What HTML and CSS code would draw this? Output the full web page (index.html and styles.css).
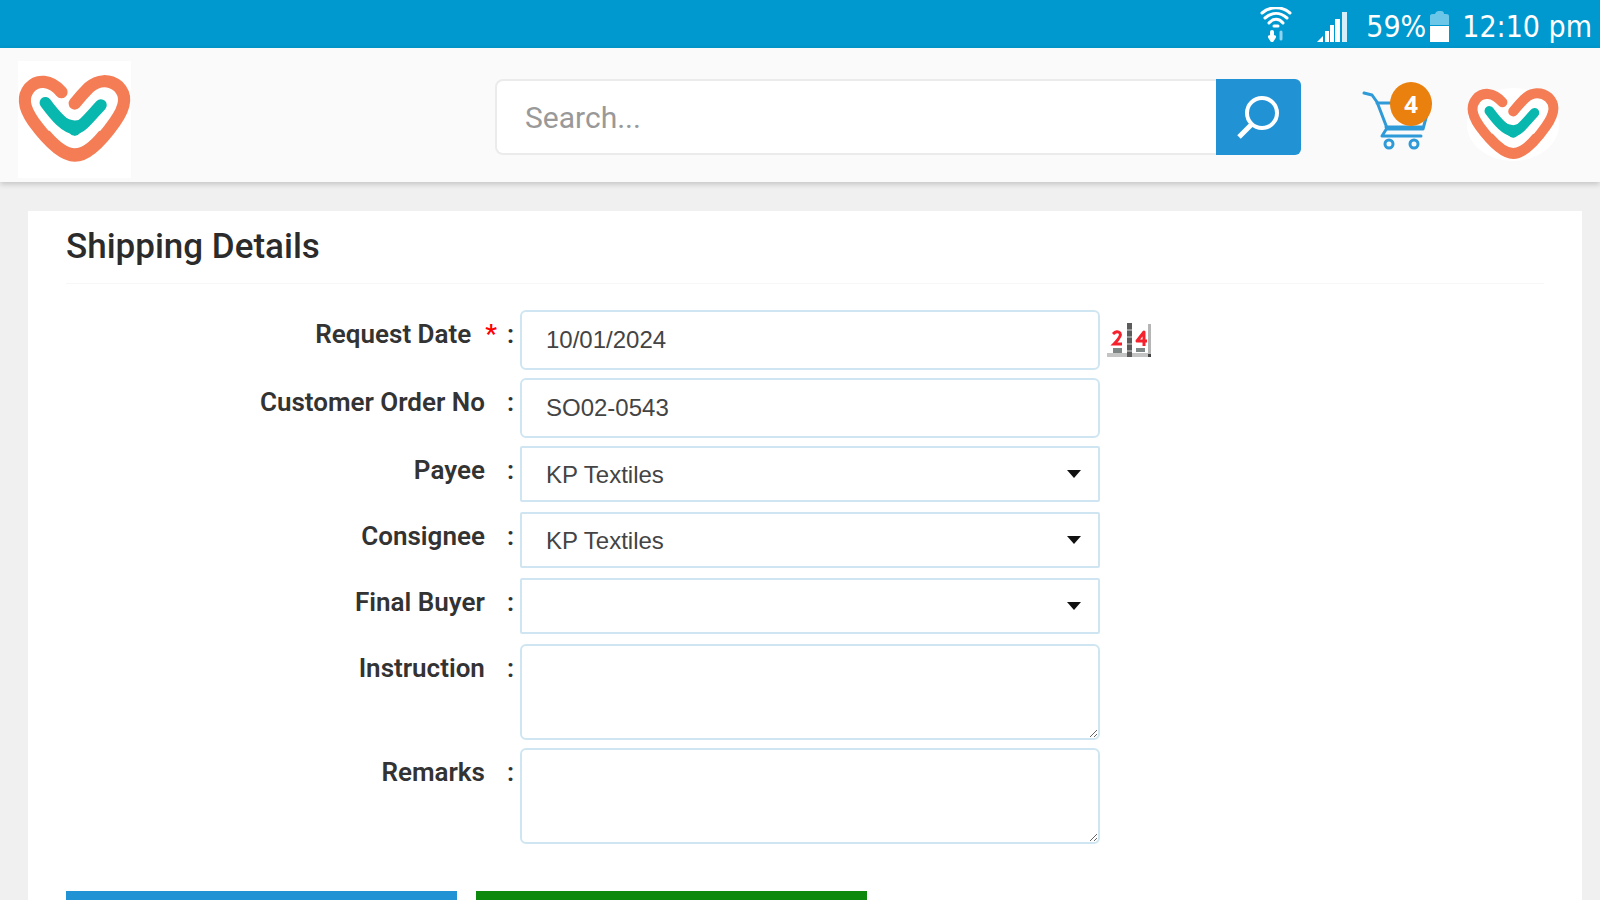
FILE: index.html
```html
<!DOCTYPE html>
<html lang="en">
<head>
  <meta charset="UTF-8" />
  <meta name="viewport" content="width=device-width, initial-scale=1.0" />
  <title>Shipping Details</title>
  <link rel="stylesheet" href="styles.css">
</head>
<body>

  <!-- Status bar -->
  <div class="status-bar">
    <svg class="wifi-icon" viewBox="0 0 32 35" width="32" height="35" fill="none" stroke="#fff" stroke-width="3" stroke-linecap="round">
      <path d="M2 6 C10 -1 22 -1 30 6" />
      <path d="M5 11 C12 5 20 5 27 11" />
      <path d="M9 16 C13 11 19 11 23 16" />
      <path d="M14 19 H18" />
      <path d="M12 25 V32 M10 30 L12 33 L14 30" stroke-width="4" />
      <path d="M21 32 V25" stroke="#8fd3ee" />
    </svg>
    <svg class="signal-icon" viewBox="0 0 31 31" width="31" height="31" fill="#fff">
      <path d="M0 31 L6 25 V31 Z" />
      <rect x="8" y="20" width="4" height="11" />
      <rect x="13" y="14" width="4" height="17" />
      <rect x="18" y="8" width="5" height="23" />
      <rect x="25" y="1" width="5" height="30" fill="#d5eef9" />
    </svg>
    <span class="battery-level">59%</span>
    <svg class="battery-icon" viewBox="0 0 21 31" width="21" height="31">
      <path d="M1 14 V5 Q1 3 4 3 H6 Q7 0 10 0 H12 Q15 0 15 3 H17 Q20 3 20 5 V14 Z" fill="#6cc6e8" />
      <path d="M1 15 H20 V31 H1 Z" fill="#fff" />
    </svg>
    <span class="clock">12:10 pm</span>
  </div>

  <!-- Header -->
  <header class="header">
    <a class="logo" href="#" aria-label="Home">
      <svg viewBox="58 104 338 266" width="113" height="89" fill="none" stroke-linecap="round" stroke-linejoin="round">
        <g id="heart">
          <path d="M188 155 C155 117 115 116 92 143 C70 170 74 200 104 243 C142 295 188 345 228 345 C268 345 310 298 348 244 C382 196 384 164 358 138 C330 116 297 118 270 142 Q248 164 228 189" stroke="#f47d55" stroke-width="37" />
          <path d="M150 278 C180 312 205 330 228 330 C252 330 276 312 304 278 C278 322 252 350 228 350 C204 350 176 320 150 278" fill="#f47d55" stroke="#f47d55" stroke-width="14" />
          <path d="M140 187 C172 230 200 262 228 264 C250 262 272 230 306 194" stroke="#08b7ad" stroke-width="35" />
          <path d="M190 234 Q228 262 264 234 Q242 276 228 278 Q212 276 190 234" fill="#08b7ad" stroke="#08b7ad" stroke-width="16" />
        </g>
      </svg>
    </a>

    <form class="search" role="search">
      <input type="search" name="search" placeholder="Search..." aria-label="Search" />
      <button type="submit" aria-label="Search">
        <svg viewBox="0 0 43 45" width="43" height="45" fill="none" stroke="#fff" stroke-width="4">
          <circle cx="25" cy="18" r="15" />
          <path d="M15 29 L2 42" stroke-width="5" />
        </svg>
      </button>
    </form>

    <a class="cart" href="#" aria-label="Cart">
      <svg viewBox="0 0 70 60" width="70" height="60" fill="none" stroke="#2f9ad8" stroke-width="3" stroke-linecap="round" stroke-linejoin="round">
        <path d="M2 2 L10 4 L15 11 L25 37 L20 45 H59" />
        <path d="M15 12 H68 L61 38 H25" />
        <path d="M24 36 H60" />
        <circle cx="27" cy="53" r="4" />
        <circle cx="52" cy="53" r="4" />
      </svg>
      <span class="badge">4</span>
    </a>

    <a class="profile" href="#" aria-label="Profile">
      <svg viewBox="58 104 338 266" width="92" height="73" fill="none" stroke-linecap="round" stroke-linejoin="round">
        <use href="#heart" />
      </svg>
    </a>
  </header>

  <main class="card">
    <h1>Shipping Details</h1>

    <form class="shipping-form">
      <div class="row">
        <label for="request-date">Request Date<span class="required">*</span><span class="colon">:</span></label>
        <input type="text" id="request-date" name="request_date" value="10/01/2024" />
        <button type="button" class="calendar" aria-label="Pick a date">
          <svg viewBox="0 0 44 36" width="44" height="36">
            <path d="M0 31 H44 V35 H0 Z" fill="#c4c4c4" />
            <path d="M41 2 H44 V35 H41 Z" fill="#b5b5b5" />
            <path d="M20 1 H25 V35 H20 Z" fill="#5c5c5c" />
            <path d="M20 8 H25 M20 15 H25 M20 22 H25 M20 29 H25" stroke="#999" stroke-width="2" />
            <path d="M6 26 H15 V31 H6 Z M29 26 H38 V30 H29 Z" fill="#7d8685" />
            <path d="M41 32 H44 V35 H41 Z" fill="#444" />
            <path d="M6 12 Q10 8 13 11 Q15 14 7 22 H15" fill="none" stroke="#f5222d" stroke-width="3" />
            <path d="M37 24 V10 L30 19 H40" fill="none" stroke="#f5222d" stroke-width="3" stroke-linejoin="round" />
          </svg>
        </button>
      </div>

      <div class="row">
        <label for="order-no">Customer Order No<span class="colon">:</span></label>
        <input type="text" id="order-no" name="order_no" value="SO02-0543" />
      </div>

      <div class="row select-row">
        <label for="payee">Payee<span class="colon">:</span></label>
        <div class="select-box">
          <select id="payee" name="payee">
            <option>KP Textiles</option>
          </select>
          <span class="arrow"></span>
        </div>
      </div>

      <div class="row select-row">
        <label for="consignee">Consignee<span class="colon">:</span></label>
        <div class="select-box">
          <select id="consignee" name="consignee">
            <option>KP Textiles</option>
          </select>
          <span class="arrow"></span>
        </div>
      </div>

      <div class="row select-row">
        <label for="final-buyer">Final Buyer<span class="colon">:</span></label>
        <div class="select-box">
          <select id="final-buyer" name="final_buyer">
            <option></option>
          </select>
          <span class="arrow"></span>
        </div>
      </div>

      <div class="row">
        <label for="instruction">Instruction<span class="colon">:</span></label>
        <textarea id="instruction" name="instruction"></textarea>
      </div>

      <div class="row">
        <label for="remarks">Remarks<span class="colon">:</span></label>
        <textarea id="remarks" name="remarks"></textarea>
      </div>

      <div class="actions">
        <button type="submit" class="btn btn-blue" aria-label="Submit"></button>
        <button type="button" class="btn btn-green" aria-label="Continue"></button>
      </div>
    </form>
  </main>

</body>
</html>
```
FILE: styles.css
```css
* {
  box-sizing: border-box;
}

body {
  margin: 0;
  height: 100vh;
  overflow-y: auto;
  scrollbar-width: none;
  background-color: #f0f0f0;
  font-family: Roboto, sans-serif;
  color: #333;
}

/* Status bar */
.status-bar {
  display: flex;
  justify-content: flex-end;
  align-items: center;
  height: 48px;
  padding: 4px 8px 0 0;
  background-color: #0099cf;
  color: #fff;
  font-family: "DejaVu Sans Condensed", "DejaVu Sans", sans-serif;
}

.wifi-icon {
  margin: 0 25px 4px 0;
}

.signal-icon {
  margin-right: 18px;
}

.battery-level {
  font-size: 30px;
  margin-right: 3px;
}

.battery-icon {
  margin-right: 12px;
}

.clock {
  font-size: 30px;
}

/* Header */
.header {
  display: flex;
  align-items: center;
  height: 134px;
  padding: 4px 41px 0 18px;
  background-color: #fafafa;
  box-shadow: 0 2px 6px rgba(0, 0, 0, 0.2);
}

.logo {
  display: flex;
  margin-top: 4px;
  padding: 14px 0;
  background-color: #fff;
}

.logo svg,
.profile svg {
  overflow: visible;
}

.search {
  display: flex;
  flex: 0 1 806px;
  height: 76px;
  margin: 0 61px 0 auto;
}

.search input {
  flex: 1;
  min-width: 0;
  padding: 0 28px;
  border: 2px solid #ebebeb;
  border-right: none;
  border-radius: 8px 0 0 8px;
  background-color: #fff;
  font-family: inherit;
  font-size: 30px;
  outline: none;
}

.search input::placeholder {
  color: #999;
}

.search button {
  display: flex;
  justify-content: center;
  align-items: center;
  width: 85px;
  padding: 0;
  border: none;
  border-radius: 0 6px 6px 0;
  background-color: #2192d4;
  cursor: pointer;
}

.cart {
  position: relative;
  display: flex;
  margin: 8px 35px 0 0;
}

.badge {
  position: absolute;
  top: -9px;
  right: 0;
  width: 42px;
  height: 44px;
  border-radius: 50%;
  background-color: #ea800d;
  color: #fff;
  font-family: "Open Sans", sans-serif;
  font-size: 24px;
  font-weight: bold;
  line-height: 44px;
  text-align: center;
}

.profile {
  display: flex;
  margin-top: 14px;
  border-radius: 50%;
  background-color: #fff;
}

/* Card */
.card {
  margin: 29px 18px 0 28px;
  padding: 15px 38px 40px;
  background-color: #fff;
}

.card h1 {
  margin: 0 0 26px;
  padding-bottom: 15px;
  border-bottom: 1px solid #f7f7f7;
  color: #2b2b2b;
  font-size: 35px;
  font-weight: 500;
  line-height: 42px;
}

.row {
  display: grid;
  grid-template-columns: 454fr 580fr 444fr;
  align-items: start;
  margin-bottom: 8px;
}

.select-row {
  margin-bottom: 10px;
}

.row label {
  display: flex;
  justify-content: flex-end;
  padding: 8px 6px 0 0;
  font-size: 26px;
  font-weight: 600;
  line-height: 32px;
}

.colon {
  margin-left: 22px;
}

.required {
  margin-left: 14px;
  color: #ff0000;
}

.required + .colon {
  margin-left: 10px;
}

.row input,
.row select,
.row textarea {
  display: block;
  width: 100%;
  height: 60px;
  padding: 0 24px;
  border: 2px solid #cfe6f2;
  border-radius: 6px;
  background-color: #fff;
  color: #444;
  font-family: "Liberation Sans", Arial, sans-serif;
  font-size: 24px;
}

.row textarea {
  height: 96px;
  padding: 12px 24px;
  resize: vertical;
}

.select-box {
  display: grid;
  align-items: center;
}

.select-box select {
  grid-area: 1 / 1;
  height: 56px;
  border-radius: 2px;
  appearance: none;
}

.arrow {
  grid-area: 1 / 1;
  justify-self: end;
  margin-right: 19px;
  border-left: 7px solid transparent;
  border-right: 7px solid transparent;
  border-top: 8px solid #111;
  pointer-events: none;
}

.calendar {
  justify-self: start;
  display: flex;
  margin: 12px 0 0 7px;
  padding: 0;
  border: none;
  background: none;
  cursor: pointer;
}

.actions {
  display: grid;
  grid-template-columns: 391fr 391fr 658fr;
  gap: 19px;
  margin-top: 47px;
}

.btn {
  height: 70px;
  border: none;
  cursor: pointer;
}

.btn-blue {
  background-color: #2192d4;
}

.btn-green {
  background-color: #0d8a0d;
}
```
